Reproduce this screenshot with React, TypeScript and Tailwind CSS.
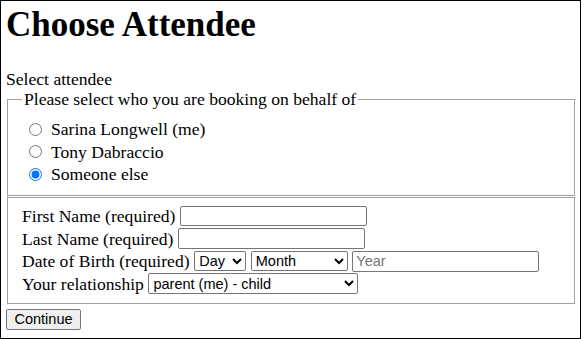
import { useState } from "react"

const serif = "font-['Liberation_Serif','Times_New_Roman',serif]"
const sans = "font-['Liberation_Sans',Arial,sans-serif]"
// groove look: dark outer line on top/left, dark inner line on bottom/right
const groove =
  "border border-t-[#a0a0a0] border-l-[#a0a0a0] border-r-white border-b-white shadow-[inset_-1px_-1px_0_#a0a0a0,inset_1px_1px_0_#ffffff]"

const attendees = ["Sarina Longwell (me)", "Tony Dabraccio", "Someone else"]

export default function App() {
  const [who, setWho] = useState("Someone else")

  return (
    <div className={`${serif} w-[581px] h-[339px] border border-black bg-white pt-[4px] pl-[5px] text-black`}>
      <h1 className="text-[35px] font-bold leading-[40px] mb-[24px]">Choose Attendee</h1>
      <div className="text-[17.6px] leading-[20px]">Select attendee</div>

      <form className="text-[17.6px]">
        <fieldset className={`${groove} ml-[1px] w-[569px] pl-[14px] pr-[14px] pt-[8px] pb-[10px]`}>
          <legend className="px-[2px] leading-[21px]">Please select who you are booking on behalf of</legend>
          {attendees.map((name) => (
            <label key={name} className="flex items-center h-[22.6px] leading-[20px]">
              <input
                type="radio"
                name="attendee"
                checked={who === name}
                onChange={() => setWho(name)}
                className="ml-[7px] mr-[9px] w-[13px] h-[13px] m-0"
              />
              <span>{name}</span>
            </label>
          ))}
        </fieldset>

        <fieldset className={`${groove} ml-[1px] w-[569px] px-[14px] pt-[7px] pb-[9px]`}>
          <div className="flex items-center gap-[4.6px] h-[22.5px] leading-[20px]">
            <span>First Name (required)</span>
            <input type="text" className={`${sans} w-[187px] h-[20px] border border-[#767676] rounded-[2px] bg-white px-[3px] text-[14.5px]`} />
          </div>
          <div className="flex items-center gap-[4.6px] h-[22.5px] leading-[20px]">
            <span>Last Name (required)</span>
            <input type="text" className={`${sans} w-[187px] h-[21px] border border-[#767676] rounded-[2px] bg-white px-[3px] text-[14.5px]`} />
          </div>
          <div className="flex items-center gap-[4.6px] h-[22.5px] leading-[20px]">
            <span>Date of Birth (required)</span>
            <select defaultValue="" className={`${sans} w-[52px] h-[20px] border border-[#767676] rounded-[2px] bg-white text-[14.5px]`}>
              <option value="">Day</option>
              {Array.from({ length: 31 }, (_, i) => (
                <option key={i} value={i + 1}>{i + 1}</option>
              ))}
            </select>
            <select defaultValue="" className={`${sans} w-[97px] h-[20px] border border-[#767676] rounded-[2px] bg-white text-[14.5px]`}>
              <option value="">Month</option>
              <option>January</option>
              <option>February</option>
              <option>March</option>
            </select>
            <input type="text" placeholder="Year" className={`${sans} w-[187px] h-[21px] border border-[#767676] rounded-[2px] bg-white px-[3px] text-[14.5px] placeholder:text-[#757575]`} />
          </div>
          <div className="flex items-center gap-[4.6px] h-[22.5px] leading-[20px]">
            <span>Your relationship</span>
            <select className={`${sans} w-[210px] h-[21px] border border-[#767676] rounded-[2px] bg-white text-[14.5px]`}>
              <option>parent (me) - child</option>
              <option>spouse</option>
              <option>other</option>
            </select>
          </div>
        </fieldset>

        <button type="button" className={`${sans} w-[75px] h-[21px] border border-[#767676] rounded-[2px] bg-[#efefef] text-[14.5px] leading-none`}>
          Continue
        </button>
      </form>
    </div>
  )
}
